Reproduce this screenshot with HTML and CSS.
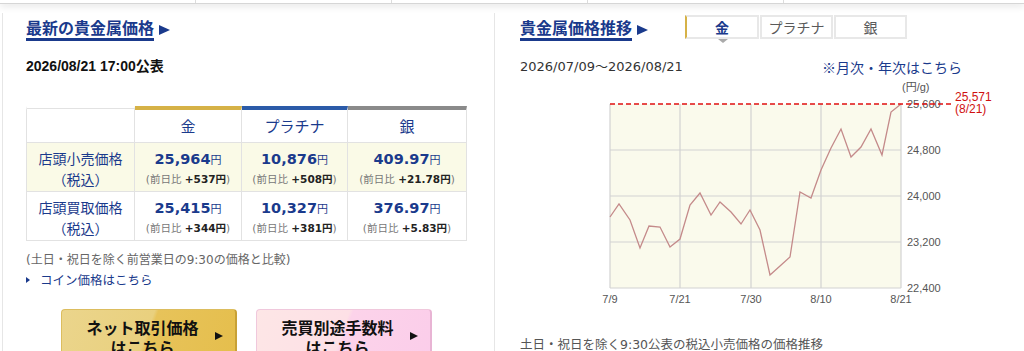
FILE: index.html
```html
<!DOCTYPE html>
<html lang="ja">
<head>
    <meta charset="UTF-8">
    <meta name="viewport" content="width=device-width, initial-scale=1.0">
    <title>貴金属価格</title>
    <link rel="stylesheet" href="styles.css">
</head>
<body>
    <div class="topnav">
        <span></span><span></span><span></span><span></span><span></span>
    </div>

    <div class="main">
        <section class="latest">
            <h2 class="sec-title"><a href="#">最新の貴金属価格</a><i class="tri"></i></h2>
            <p class="stamp">2026/08/21 17:00公表</p>

            <table class="prices">
                <colgroup>
                    <col class="c-label"><col class="c-gold"><col class="c-plat"><col class="c-silver">
                </colgroup>
                <tr class="head">
                    <th class="corner"></th>
                    <th class="gold">金</th>
                    <th class="plat">プラチナ</th>
                    <th class="silver">銀</th>
                </tr>
                <tr class="retail">
                    <th>店頭小売価格<br>（税込）</th>
                    <td><b>25,964</b><span class="yen">円</span><small>(前日比 <em>+537円</em>)</small></td>
                    <td><b>10,876</b><span class="yen">円</span><small>(前日比 <em>+508円</em>)</small></td>
                    <td><b>409.97</b><span class="yen">円</span><small>(前日比 <em>+21.78円</em>)</small></td>
                </tr>
                <tr>
                    <th>店頭買取価格<br>（税込）</th>
                    <td><b>25,415</b><span class="yen">円</span><small>(前日比 <em>+344円</em>)</small></td>
                    <td><b>10,327</b><span class="yen">円</span><small>(前日比 <em>+381円</em>)</small></td>
                    <td><b>376.97</b><span class="yen">円</span><small>(前日比 <em>+5.83円</em>)</small></td>
                </tr>
            </table>

            <p class="note">(土日・祝日を除く前営業日の9:30の価格と比較)</p>
            <a class="more" href="#">コイン価格はこちら</a>

            <div class="btns">
                <a class="btn btn-gold" href="#">ネット取引価格<br>はこちら</a>
                <a class="btn btn-pink" href="#">売買別途手数料<br>はこちら</a>
            </div>
        </section>

        <section class="trend">
            <div class="trend-head">
                <h2 class="sec-title"><a href="#">貴金属価格推移</a><i class="tri"></i></h2>
                <ul class="tabs">
                    <li class="on">金</li>
                    <li>プラチナ</li>
                    <li>銀</li>
                </ul>
            </div>

            <div class="range">
                <span>2026/07/09～2026/08/21</span>
                <a href="#">※月次・年次はこちら</a>
            </div>

            <svg class="chart" width="420" height="226" viewBox="580 80 420 226">
                <rect x="610" y="104" width="291" height="184" fill="#fafaec"/>
                <g stroke="#d2d2d2" stroke-width="1.2" fill="none">
                    <line x1="610" y1="150" x2="901" y2="150"/>
                    <line x1="610" y1="196" x2="901" y2="196"/>
                    <line x1="610" y1="242" x2="901" y2="242"/>
                    <line x1="610" y1="288" x2="901" y2="288"/>
                    <line x1="610" y1="104" x2="610" y2="288"/>
                    <line x1="680" y1="104" x2="680" y2="288"/>
                    <line x1="751" y1="104" x2="751" y2="288"/>
                    <line x1="821" y1="104" x2="821" y2="288"/>
                    <line x1="901" y1="104" x2="901" y2="288"/>
                </g>
                <polyline fill="none" stroke="#c48a8a" stroke-width="1.3"
                    points="610,217 619,204 630,220 640,248 649,226 660,227 670,247 680,239 690,205 700,193 711,215 720,202 731,212 741,224 750,210 760,230 770,275 780,266 790,257 800,192 811,198 821,170 831,148 841,129 851,157 861,147 871,129 882,155 891,112 901,104"/>
                <g class="axis">
                    <text x="902" y="91">(円/g)</text>
                    <text x="907" y="108">25,600</text>
                    <text x="907" y="154">24,800</text>
                    <text x="907" y="200">24,000</text>
                    <text x="907" y="246">23,200</text>
                    <text x="907" y="292">22,400</text>
                    <text x="610" y="303" text-anchor="middle">7/9</text>
                    <text x="680" y="303" text-anchor="middle">7/21</text>
                    <text x="751" y="303" text-anchor="middle">7/30</text>
                    <text x="821" y="303" text-anchor="middle">8/10</text>
                    <text x="901" y="303" text-anchor="middle">8/21</text>
                </g>
                <line x1="610" y1="104" x2="952" y2="104" stroke="#e01010" stroke-width="1.3" stroke-dasharray="5 3"/>
                <g class="last">
                    <text x="955" y="101">25,571</text>
                    <text x="955" y="113">(8/21)</text>
                </g>
            </svg>

            <p class="caption">土日・祝日を除く9:30公表の税込小売価格の価格推移</p>
        </section>
    </div>
</body>
</html>
```

FILE: styles.css
```css
body {
    margin: 0;
    font-family: "DejaVu Sans", "Noto Sans CJK JP", sans-serif;
    color: #333;
    background: #fff;
    overflow: hidden;
}
a {
    color: #1a3a8c;
    text-decoration: none;
}

/* top strip */
.topnav {
    display: flex;
    height: 3px;
    border-bottom: 1px solid #d6d6d6;
    box-shadow: 0 2px 7px rgba(0, 0, 0, 0.14);
}
.topnav span {
    flex: 0 0 195px;
    border-right: 1px solid #dcdcdc;
}
.topnav span:last-child {
    flex: 1;
    border-right: 0;
}

.main {
    display: flex;
    margin: 9px 0 0 2px;
}

/* section titles */
.sec-title {
    margin: 0;
    display: flex;
    align-items: center;
    font: bold 16px/22px "Noto Sans CJK JP", sans-serif;
    color: #1a3a8c;
}
.sec-title a {
    border-bottom: 3px solid #1a3a8c;
}
.tri {
    width: 0;
    height: 0;
    margin: 2px 0 0 5px;
    border-left: 11px solid #1a3a8c;
    border-top: 5px solid transparent;
    border-bottom: 5px solid transparent;
}

/* left column */
.latest {
    width: 468px;
    height: 336px;
    padding: 3px 0 0 23px;
    border-left: 1px solid #e6e6e6;
    border-right: 1px solid #e6e6e6;
}
.stamp {
    margin: 15px 0 0;
    font: bold 14px/20px "Liberation Sans", "Noto Sans CJK JP", sans-serif;
    color: #111;
}

.prices {
    margin-top: 30px;
    width: 441px;
    table-layout: fixed;
    border-collapse: separate;
    border-spacing: 0;
}
.c-label { width: 109px; }
.c-gold { width: 107px; }
.c-plat { width: 106px; }
.c-silver { width: 119px; }

.prices th,
.prices td {
    padding: 0;
    border-right: 1px solid #e2e2e2;
    border-bottom: 1px solid #e2e2e2;
    text-align: center;
}
.prices tr > :first-child {
    border-left: 1px solid #e2e2e2;
}
.prices tr > th {
    padding: 5px 0 1px;
    font: 14px/21px "Noto Sans CJK JP", sans-serif;
    color: #1a3a8c;
}
.prices tr.head > th {
    padding: 0;
    font: 15px/32px "Noto Sans CJK JP", sans-serif;
    color: #1a3a8c;
}
.prices .corner {
    border-top: 4px solid transparent;
    background: linear-gradient(#e2e2e2, #e2e2e2) 0 2px / 100% 1px no-repeat;
    background-origin: border-box;
}
.prices .gold { border-top: 4px solid #d6b247; }
.prices .plat { border-top: 4px solid #2b5ba8; }
.prices .silver { border-top: 4px solid #8a8a8a; }

.prices td {
    padding-top: 6px;
    vertical-align: top;
    line-height: 20px;
}
.retail th,
.retail td {
    background: #fafae7;
}
.prices b {
    font: bold 14.5px/20px "DejaVu Sans", sans-serif;
    color: #1a3a8c;
}
.prices .yen {
    font: 11px "Noto Sans CJK JP", sans-serif;
    color: #1a3a8c;
}
.prices small {
    display: block;
    font-size: 10.5px;
    line-height: 20px;
    color: #777;
}
.prices em {
    font-style: normal;
    font-weight: bold;
    color: #222;
}

.note {
    margin: 9px 0 0;
    font-size: 12px;
    line-height: 20px;
    color: #666;
}
.more {
    display: flex;
    align-items: center;
    font: 12.5px/20px "Noto Sans CJK JP", sans-serif;
}
.more::before {
    content: "";
    margin-right: 10px;
    border-left: 4px solid #1a3a8c;
    border-top: 3px solid transparent;
    border-bottom: 3px solid transparent;
}

.btns {
    display: flex;
    gap: 19px;
    margin: 19px 0 0 35px;
}
.btn {
    position: relative;
    box-sizing: border-box;
    width: 176px;
    height: 60px;
    padding: 7px 18px 0 6px;
    border-radius: 4px;
    text-align: center;
    font: bold 16px/20px "Noto Sans CJK JP", sans-serif;
    color: #111;
}
.btn::after {
    content: "";
    position: absolute;
    right: 12px;
    top: 22px;
    border-left: 8px solid #111;
    border-top: 4px solid transparent;
    border-bottom: 4px solid transparent;
}
.btn-gold {
    background: linear-gradient(110deg, #ebd58c 0%, #e9d07e 48%, #e7c35a 50%, #e5be4c 100%);
    border: 1px solid #dcbd5e;
    border-right: 2px solid #c8a136;
    border-bottom: 2px solid #c8a136;
}
.btn-pink {
    background: linear-gradient(110deg, #fde6e6 0%, #fde0e6 48%, #fcd3ea 50%, #fbcdea 100%);
    border: 1px solid #f0c8dc;
    border-right: 2px solid #e8b4d4;
    border-bottom: 2px solid #e8b4d4;
}

/* right column */
.trend {
    flex: 1;
    min-width: 0;
    padding: 3px 24px 0 25px;
}
.trend-head {
    display: flex;
    align-items: flex-start;
}
.tabs {
    display: flex;
    gap: 1px;
    margin: -1px 0 0 37px;
    padding: 0;
    list-style: none;
}
.tabs li {
    position: relative;
    box-sizing: border-box;
    width: 73px;
    height: 24px;
    border: 2px solid #e8e8e8;
    background: #fff;
    text-align: center;
    font: 14px/20px "Noto Sans CJK JP", sans-serif;
    color: #5a5a5a;
}
.tabs li.on {
    width: 74px;
    border-left-color: #d6b247;
    font-weight: bold;
    color: #1a3a8c;
}
.tabs li.on::after {
    content: "";
    position: absolute;
    left: 31px;
    top: calc(100% + 2px);
    border-top: 4px solid #aaa;
    border-left: 5px solid transparent;
    border-right: 5px solid transparent;
}

.range {
    display: flex;
    justify-content: space-between;
    margin-top: 16px;
    padding-right: 38px;
    font-size: 13px;
    line-height: 20px;
    color: #333;
}
.range a {
    font: 14px/20px "Noto Sans CJK JP", sans-serif;
}

.chart {
    display: block;
    margin: 3px 0 0 60px;
}
.chart text {
    font-family: "Liberation Sans", "Noto Sans CJK JP", sans-serif;
    font-size: 11px;
}
.axis text {
    fill: #555;
}
.last text {
    fill: #d01010;
    font-size: 12px;
}

.caption {
    margin: 31px 0 0;
    font-size: 12.5px;
    line-height: 16px;
    color: #555;
}
```
